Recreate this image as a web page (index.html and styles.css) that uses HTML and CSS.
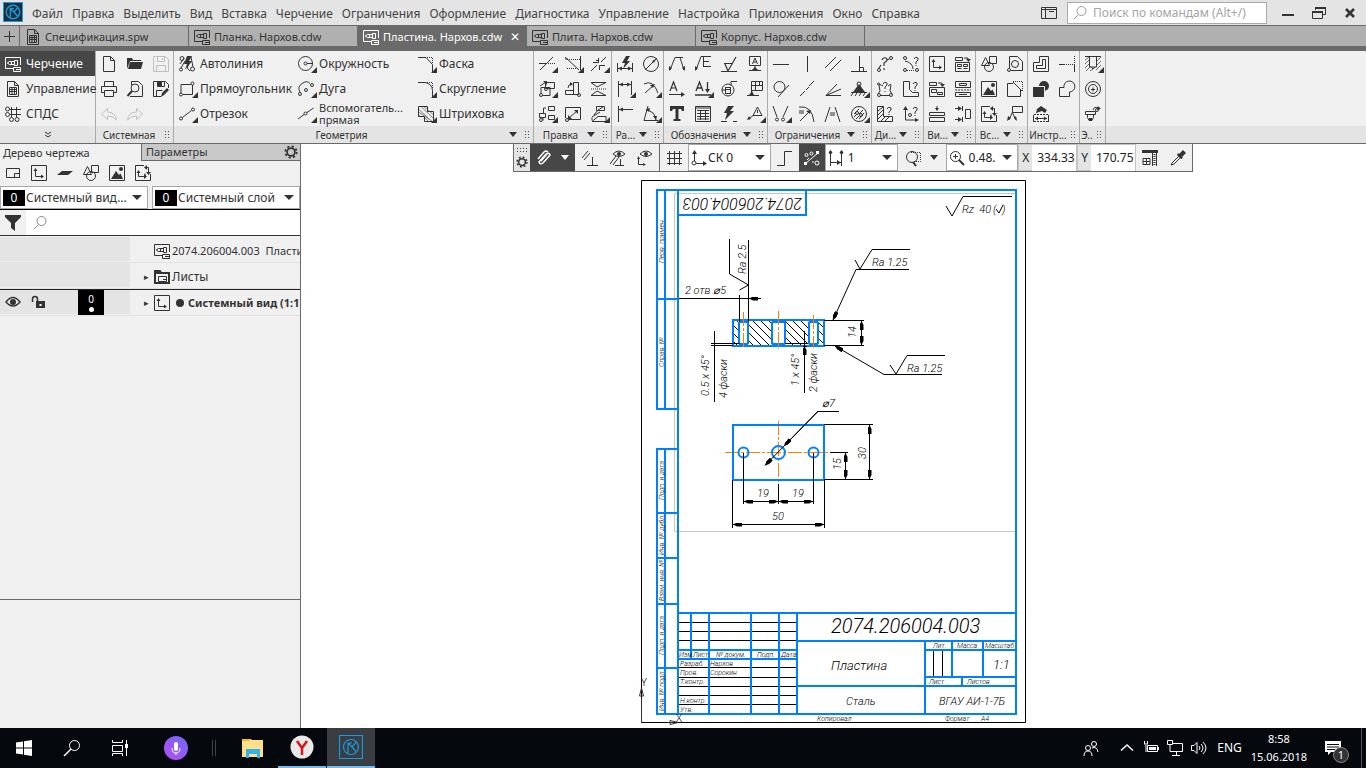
FILE: index.html
```html
<!DOCTYPE html>
<html lang="ru">
<head>
  <meta charset="utf-8">
  <title>Пластина. Нархов.cdw</title>
  <link rel="stylesheet" href="styles.css">
</head>
<body>

<svg class="defs">
  <symbol id="cdw" viewBox="0 0 16 16"><path d="M15.500 9V1.500H.5v11h8M9.500 4.500h3v5h-3zM9.500 5.500h-5l-1.500 1v1l1.500 1h5M2 7h1M6.500 5.500v3M8.500 11.500h7v4h-7zM11 13.500h4"/></symbol>
  <symbol id="spw" viewBox="0 0 16 16"><path d="M2.500.5h7l4 4v11h-11zM9.500.5v4h4M4.500 6.500h7v7h-7zM4.500 8.500h7M4.500 10.500h7M7 6v7.500M9.500 6v7.500"/></symbol>
  <symbol id="view" viewBox="0 0 16 16"><path d="M.5.5h15v15h-15zM4.500 5v6.500H11"/><path class="f" d="M2.500 6l2-3 2 3zM10 9.500l3 2-3 2z"/></symbol>
  <symbol id="frag" viewBox="0 0 16 16"><path d="M8.500.5h7v7h-7zM.5 9.500l4-8 4 8z"/><circle cx="8" cy="11" r="4.500"/></symbol>
  <symbol id="pic" viewBox="0 0 16 16"><path d="M.5.5h15v15h-15z"/><path class="f" d="M2 14l5-8 3 4 1.500-1.500L14 14z"/><circle class="f" cx="12" cy="4" r="2"/></symbol>
  <symbol id="viewlink" viewBox="0 0 16 16"><path d="M9 .5H.5v15h15V9"/><path d="M10 2.500h3.500v5M3.500 7v4.500H10v-3"/><path class="f" d="M12 0v5l-3-2.500zM11 7h5l-2.500 3zM1.500 8l2-3 2 3zM9 9l3 2.500L9 14z"/></symbol>
  <symbol id="glass" viewBox="0 0 16 16"><circle cx="9.500" cy="6" r="4.500"/><path d="M6.500 9.500L2 14"/></symbol>
  <symbol id="gear" viewBox="0 0 16 16"><circle cx="8" cy="8" r="4.500" stroke-width="2"/><circle cx="8" cy="8" r="6.500" stroke-width="2" stroke-dasharray="2.500 2.600"/></symbol>
  <symbol id="logo" viewBox="0 0 20 20"><circle cx="10" cy="10" r="7.500"/><path d="M7 16V6h4M7 6l4 4 4.500-5M11 10l4.500 5"/></symbol>
</svg>

<header class="menubar">
  <svg class="app-logo"><use href="#logo"/></svg>
  <nav class="menu">
    <button>Файл</button>
    <button>Правка</button>
    <button>Выделить</button>
    <button>Вид</button>
    <button>Вставка</button>
    <button>Черчение</button>
    <button>Ограничения</button>
    <button>Оформление</button>
    <button>Диагностика</button>
    <button>Управление</button>
    <button>Настройка</button>
    <button>Приложения</button>
    <button>Окно</button>
    <button>Справка</button>
  </nav>
  <button class="layout-btn" aria-label="Экран"><svg class="i"><path d="M.5 2.500h15v11h-15zM.5 4.500h15M4.500 3v10M8 6.500h5"/></svg></button>
  <label class="search"><svg class="i"><use href="#glass"/></svg><input type="text" placeholder="Поиск по командам (Alt+/)" aria-label="Поиск"></label>
  <button class="win" aria-label="Свернуть"><svg class="i"><path class="f" d="M2 9h12v2H2z" stroke="none"/></svg></button>
  <button class="win" aria-label="Развернуть"><svg class="i"><path d="M4.500 5V3.500h10v6H12M1.500 7.500h10v6h-10z"/><path d="M4 3h11M1 7h11" stroke-width="2"/></svg></button>
  <button class="win" aria-label="Закрыть"><svg class="i"><path d="M4 4l8 8M12 4l-8 8" stroke-width="2.500"/></svg></button>
</header>

<div class="tabs">
  <button class="tab-add" aria-label="Создать"><svg class="i"><path d="M8.500 3v11M3 8.500h11"/></svg></button>
  <button class="tab"><svg class="i"><use href="#spw"/></svg>Спецификация.spw</button>
  <button class="tab"><svg class="i"><use href="#cdw"/></svg>Планка. Нархов.cdw</button>
  <button class="tab active"><svg class="i"><use href="#cdw"/></svg>Пластина. Нархов.cdw<span class="close">✕</span></button>
  <button class="tab"><svg class="i"><use href="#cdw"/></svg>Плита. Нархов.cdw</button>
  <button class="tab"><svg class="i"><use href="#cdw"/></svg>Корпус. Нархов.cdw</button>
</div>

<div class="ribbon">
  <div class="group sets">
    <div class="set-list">
      <button class="on"><svg class="i"><use href="#cdw"/></svg>Черчение</button>
      <button><svg class="i"><use href="#spw"/></svg>Управление</button>
      <button><svg class="i"><path d="M5 3.500h11M5 8.500h11M6.500 1v10M11.500 1v10"/><circle cx="2.500" cy="3" r="2"/><circle cx="2.500" cy="8.500" r="2"/><circle cx="6.500" cy="13.500" r="2"/><circle cx="12" cy="13.500" r="2"/></svg>СПДС</button>
    </div>
    <footer><svg class="i"><path d="M5 5l3 2 3-2M5 8l3 2 3-2"/></svg></footer>
  </div>

  <div class="group">
    <div class="tools w3">
      <button><svg class="i"><path d="M2.500.5h7l4 4v11h-11zM9.500.5v4h4"/></svg></button>
      <button><svg class="i"><path class="f" d="M0 13V2h5l1 2h8v1H3z"/><path class="f" d="M3 6h13l-2 7H1z"/></svg></button>
      <button class="off"><svg class="i"><path d="M.5.5h12l3 3v12H.5zM4.500.5v5h7v-5M3.500 15V9.500h9V15M9.500 2v2"/></svg></button>
      <button><svg class="i"><path d="M3.500 5V.5h9V5M3.500 11.500h-3v-6h15v6h-3M3.500 9.500h9v6h-9z"/></svg></button>
      <button><svg class="i"><path d="M4.500 4V.5h7l4 4v11h-8M3 15.500h5"/><circle cx="8" cy="7" r="4"/><path d="M5 10l-4.500 5" stroke-width="2"/></svg></button>
      <button><svg class="i"><path d="M8 15.500H.5V.5h12l3 3V7M4.500.5v5h7v-5M3.500 15V9.500h6" /><path class="f" d="M8 16l1-4 5-5 2 2-5 5z"/><path class="f" d="M4 1h5v4H4z"/></svg></button>
      <button class="off"><svg class="i"><path d="M.5 8l6-5.500v3.500q8 0 9 8-3-4-9-4v3.500z"/></svg></button>
      <button class="off"><svg class="i"><path d="M15.500 8l-6-5.500v3.500q-8 0-9 8 3-4 9-4v3.500z"/></svg></button>
    </div>
    <footer><span>Системная</span><i class="grip"></i></footer>
  </div>

  <div class="group geometry">
    <div class="commands">
      <button><svg class="i"><circle cx="3" cy="2.500" r="2"/><circle cx="2" cy="13.500" r="1.500"/><circle cx="13.500" cy="13" r="2"/><path d="M5 2l-4 6M2 12l4-7M11 15q-4-2-2-6M12 1l2 10"/><path class="f" d="M8 0h5l-3 5h3l-7 9 2-6H5z"/></svg>Автолиния</button>
      <button class="more"><svg class="i"><path d="M2 12V3.500h10M4 13.500h9.500V4"/><circle cx="2" cy="13.500" r="1.500"/><circle cx="13.500" cy="2.500" r="1.500"/></svg>Прямоугольник</button>
      <button class="more"><svg class="i"><circle cx="2" cy="12.500" r="1.500"/><circle cx="14" cy="3.500" r="1.500"/><path d="M3.500 11.500l9-7"/></svg>Отрезок</button>
      <button class="more"><svg class="i"><circle cx="7.500" cy="7.500" r="7"/><circle cx="7.500" cy="7.500" r="1.500"/><path d="M9 7.500h6"/></svg>Окружность</button>
      <button class="more"><svg class="i"><path d="M2 11q-3-5 2-8.500t8 0"/><circle cx="2" cy="13" r="1.500"/><circle cx="8" cy="9" r="1.500"/><circle cx="14" cy="4" r="1.500"/></svg>Дуга</button>
      <button class="more two"><svg class="i"><path d="M0 13l6-4.500M9 6.500L15.500 2"/><circle cx="7.500" cy="7.500" r="1.500"/></svg><span>Вспомогатель...<br>прямая</span></button>
      <button class="more"><svg class="i"><path d="M0 1.500h8l6.500 7V16"/><path d="M9 1.500h5.500V8" stroke-dasharray="1 1"/></svg>Фаска</button>
      <button class="more"><svg class="i"><path d="M0 1.500h7q7 1 7.500 8V16"/><path d="M9 1.500h5.500V8" stroke-dasharray="1 1"/></svg>Скругление</button>
      <button class="more"><svg class="i"><path d="M.5.5h9v5h6v10h-9v-5h-6z"/><path d="M.5 3l10 9.500M.5 6l14 9.500M3 .5l12 11.500M6 .5l9 8M.5 9l2 1.500M7 12l3 3" stroke-width=".6"/></svg>Штриховка</button>
    </div>
    <footer><span>Геометрия</span><i class="arrow"></i><i class="grip"></i></footer>
  </div>

  <div class="group">
    <div class="tools w3">
      <button class="more"><svg class="i"><path d="M0 7.500h8M1 14L14 1"/><path d="M9 7.500h7" stroke-dasharray="1 1"/></svg></button>
      <button class="more"><svg class="i"><path d="M0 1l14 13M15.500 0v14M0 3h3"/><path d="M4 3.500h11M2 12.500h11" stroke-dasharray="1 1"/></svg></button>
      <button class="more"><svg class="i"><path d="M0 15l6-6M10 6l5-5M2 6.500h5.500V2M14 9.500H8.500V14M5 4.500h3"/></svg></button>
      <button class="more"><svg class="i"><path d="M6.500 1.500h9v6h-9zM4 14.500h7v-8h-9v6M1 5l6-4"/><circle cx="2" cy="14" r="1.500"/><circle cx="7" cy="8" r="1.500"/><path class="f" d="M4 0h4v4z"/></svg></button>
      <button><svg class="i"><path d="M8.500 1.500h5v12h-5zM.5 9.500h8v4h-8zM3 7q0-4 4-4"/><circle cx="14" cy="14" r="1.500"/><path class="f" d="M5 1l3 2-3 2z"/></svg></button>
      <button><svg class="i"><path d="M0 1.500h15L6 6 0 1.500M0 14.500h15L6 10z"/><path d="M0 8h16" stroke-dasharray="1 1"/></svg></button>
      <button class="more"><svg class="i"><path d="M9.500.5h6v4h-6zM.5 7.500h6v4h-6zM9.500 9.500h6v4h-6zM7 2H4.500v5M4 12v2.500"/><circle cx="2" cy="14" r="1.500"/></svg></button>
      <button><svg class="i"><path d="M.5 12V1.500h15v12H4M4 12l8-7"/><path class="f" d="M9 4h4v4zM3 9v4h4z"/><circle cx="2" cy="14" r="1.500"/></svg></button>
      <button class="more"><svg class="i"><path d="M5.500.5h8v4h-8zM1 15.500h14v-5H7zM1 11l8-5M1 11.500v3M7 4l-4 5M7 4l5-3"/></svg></button>
    </div>
    <footer><span>Правка</span><i class="arrow"></i><i class="grip"></i></footer>
  </div>

  <div class="group">
    <div class="tools w2">
      <button><svg class="i"><path d="M.5 7v9M15.500 7v9M1 12.500h14"/><path class="f" d="M9 0h4l-3 5h3l-7 8 2-6H5zM1 12.500l4-2v4zM15 12.500l-4-2v4z"/></svg></button>
      <button><svg class="i"><circle cx="8" cy="8" r="7.500"/><path d="M2 14L14 2"/><path class="f" d="M13 3l-4 2 2 2z"/></svg></button>
      <button class="more"><svg class="i"><path d="M1.500 0v16M14.500 0v14M2 3.500h12"/><path class="f" d="M2 3.500l4-2v4zM14 3.500l-4-2v4z"/></svg></button>
      <button class="more"><svg class="i"><path d="M1 3q9-5 14 9M2 12l9-8"/><path class="f" d="M12 3L7 4l3 3z"/></svg></button>
      <button><svg class="i"><path d="M1.500 0v16M2 3.500h14"/><path class="f" d="M2 3.500l4-2v4z"/></svg></button>
      <button class="more"><svg class="i"><path d="M5 0L1 14.500h14M3 4q9 1 10 10"/><path class="f" d="M3 3l4-1-1 4zM13 14l-3-4h4z"/></svg></button>
    </div>
    <footer><span>Ра...</span><i class="arrow"></i><i class="grip"></i></footer>
  </div>

  <div class="group">
    <div class="tools w4">
      <button><svg class="i"><path d="M1 14L6 1.500h5L15 14M11 1.500h3"/><path class="f" d="M0 15v-5l3 2zM16 15v-5l-3 2z"/></svg></button>
      <button><svg class="i"><path d="M1 14L6 .5h2M8.500.5v10M8 .5h8M8 5.500h6M8 10.500h8"/><path class="f" d="M0 15v-5l3 2z"/></svg></button>
      <button><svg class="i"><path d="M0 15.500h16M3 7.500h9M4 8l3 7 8-14" stroke-width="1.200"/></svg></button>
      <button><svg class="i"><path d="M2.500.5h11v9h-11zM8 10v4M2 14.500h12M5.500 8L8 2l2.500 6M6 6h4"/><path class="f" d="M5 14l3-3 3 3z"/></svg></button>
      <button><svg class="i"><path d="M1 10L4.500 1 8 10M2 7h5M0 13.500h13" stroke-width="1.200"/><path class="f" d="M12 11l4 2.500-4 2.500z"/></svg></button>
      <button class="more"><svg class="i"><path d="M1 10L4.500 1 8 10M2 7h5M12.500 1v8M0 14h16" stroke-width="1.300"/><path class="f" d="M10 8h5l-2.500 4z"/></svg></button>
      <button><svg class="i"><circle cx="7" cy="9" r="6"/><path d="M4.500 6v7M9.500 6v7M5 6.500h4M5 12.500h4M5 8.500h4M10 5V.5h6M1 9h4"/></svg></button>
      <button><svg class="i"><path d="M4.500 14V.5h11v9h-11M4.500 4.500h11M8.500 1v8M12.500 1v4M0 14.500h12"/><path class="f" d="M2 14l3-4 2 4z"/></svg></button>
      <button><svg class="i"><path class="f" d="M1 0h14v5h-2l-1-2H9.500v10h2V15h-7v-2h2V3H4L3 5H1z"/></svg></button>
      <button><svg class="i"><path d="M.5.5h15v15H.5zM2 4.500h12M2 7.500h12M2 10.500h12M2 13h12M5.500 4v10M10.500 4v10M1 2h14"/></svg></button>
      <button><svg class="i"><path class="f" d="M7 0h6l-4 5h4l-9 9 2-7H3z"/><path d="M0 15.500h6M12 15.500h4"/></svg></button>
      <button class="more"><svg class="i"><path d="M6 9.500L10.500 1 15 9.500zM10.500 4v3M6 9.500L2 13"/><path class="f" d="M0 14l2-4 2 3z"/></svg></button>
    </div>
    <footer><span>Обозначения</span><i class="arrow"></i><i class="grip"></i></footer>
  </div>

  <div class="group">
    <div class="tools w4">
      <button><svg class="i"><path d="M0 8.500h16"/></svg></button>
      <button><svg class="i"><path d="M8.500 0v16"/></svg></button>
      <button><svg class="i"><path d="M0 12L11 1M5 15L16 4"/></svg></button>
      <button><svg class="i"><path d="M0 15.500h16M8.500 0v15M8 11.500h4.500v4"/></svg></button>
      <button><svg class="i"><circle cx="6.500" cy="6" r="5.500"/><path d="M5 16L16 4"/></svg></button>
      <button><svg class="i"><path d="M1 15l5-5M7 9l3-3M10 5l5-5"/></svg></button>
      <button><svg class="i"><path d="M1 14.500L12 3M1 14.500L16 8M1 14.500h15"/></svg></button>
      <button class="more"><svg class="i"><circle cx="8" cy="3" r="2"/><path class="f" d="M8 3l6 8H2z"/><path d="M0 11.500h16M2 12l-2 3M6 12l-2 3M10 12l-2 3M14 12l-2 3"/></svg></button>
      <button class="more"><svg class="i"><path d="M0 0l4 11M15 0l-5 11"/><circle cx="4" cy="13.500" r="1.500"/><circle cx="10" cy="13.500" r="1.500"/></svg></button>
      <button><svg class="i"><path d="M0 1q13-2 15 15M0 5h5M0 7h5M1 15L11 5"/><path class="f" d="M12 4L7 5l4 3z"/></svg></button>
      <button><svg class="i"><path d="M0 16L5 1M10 1l5 15M5 7h5M5 9h5"/></svg></button>
      <button class="more"><svg class="i"><circle cx="8" cy="8" r="7.500"/><path d="M3 8l5-5M3 11l3-3M8 8l4-4M5 13l3-3M8 13l5-6"/><circle cx="6" cy="7" r="1.500"/><circle cx="10" cy="9" r="1.500"/></svg></button>
    </div>
    <footer><span>Ограничения</span><i class="arrow"></i><i class="grip"></i></footer>
  </div>

  <div class="group">
    <div class="tools w2">
      <button><svg class="i"><circle cx="2" cy="14" r="1.500"/><circle cx="14" cy="2" r="1.500"/><path d="M2 12l2-3M10 4l2-1M5 4q1-3 4-2 3 2-2 5v3M7 12v2" stroke-width="1.200"/></svg></button>
      <button><svg class="i"><circle cx="2" cy="2" r="1.500"/><circle cx="2" cy="14" r="1.500"/><circle cx="14" cy="14" r="1.500"/><path d="M2 5q8 2 8 8M11 3q1-3 4-1 1 2-2 4v2M13 9v1"/><path d="M4 14.500h8" stroke-dasharray="1 1"/></svg></button>
      <button><svg class="i"><path d="M2 3l4 2M14 3l-3 2M2 4l1 6-2 3M14 4l-1 6 2 3M3 14.500h10M6 3q1-3 4-1 1 2-2 4v2M8 10v1"/><circle cx="2" cy="14" r="1.500"/><circle cx="14" cy="14" r="1.500"/><circle cx="1.500" cy="3" r="1"/></svg></button>
      <button><svg class="i"><path d="M.5.5h6v8l3 3h6v4H.5zM10 3q1-3 4-1 1 2-2 4v2M12 9v1"/></svg></button>
      <button><svg class="i"><path d="M.5.5h6v10h9v5H.5zM1 5l5-4M1 9l5-5M1 13l6-6M4 15l4-4M8 15l4-4M10 3q1-3 4-1 1 2-2 4v1M12 8v1"/></svg></button>
      <button><svg class="i"><path d="M2.500 2v12H14M10 3q1-3 4-1 1 2-2 4v2M12 9v1"/><circle cx="7" cy="9" r="1.500"/><path class="f" d="M0 4l2.500-4L5 4zM12 12l4 2-4 2z"/></svg></button>
    </div>
    <footer><span>Ди...</span><i class="arrow"></i><i class="grip"></i></footer>
  </div>

  <div class="group">
    <div class="tools w2">
      <button><svg class="i"><use href="#view"/></svg></button>
      <button><svg class="i"><path d="M.5 1.500h7v3h-7zM.5 6.500h14v9H.5zM2.500 8.500h4v2h-4zM8.500 8.500h4v2h-4zM2.500 12.500h4M8.500 12.500h4M9 2h4v2"/><path class="f" d="M11 3h5l-2.500 3z"/></svg></button>
      <button><svg class="i"><path d="M.5 1.500h7v3h-7zM.5 6.500h15v9H.5zM2.500 8.500h5v3h-5zM8.500 11.500h5v2h-5zM9 2h4v2"/><path class="f" d="M11 3h5l-2.500 3z"/></svg></button>
      <button><svg class="i"><path d="M.5.5h15v6H.5zM4.500 2.500h7v2h-7zM.5 11.500h15v4H.5zM4 13.500h8"/><path d="M0 9h16" stroke-dasharray="2 1"/></svg></button>
      <button><svg class="i"><path d="M.5 6.500h15v3H.5zM.5 11.500h15v4H.5zM8 0v4"/><path class="f" d="M6 2h4L8 5z"/></svg></button>
      <button><svg class="i"><path d="M10.500 3.500h5v9h-5zM7.500 0v5M7.500 11v5M0 2.500h5M0 13.500h5"/><path class="f" d="M3 0l4 2.500L3 5zM3 11l4 2.500L3 16z"/></svg></button>
    </div>
    <footer><span>Ви...</span><i class="arrow"></i><i class="grip"></i></footer>
  </div>

  <div class="group">
    <div class="tools w2">
      <button><svg class="i"><use href="#frag"/></svg></button>
      <button><svg class="i"><path d="M2.500 12V.5h8l5 5v9H4"/><circle cx="8" cy="8" r="3.500"/><circle cx="2" cy="14" r="1.500"/></svg></button>
      <button><svg class="i"><use href="#pic"/></svg></button>
      <button><svg class="i"><path d="M6 2.500H.5v13h13V9M6 1l9 9"/><path d="M6 .5h9.500V10" stroke-dasharray="1 1"/></svg></button>
      <button><svg class="i"><use href="#viewlink"/></svg></button>
      <button><svg class="i"><path d="M5.500.5h10v6h-10zM5.500 6L2 14M5.500 7L9 14"/><path class="f" d="M0 15l1-5 3 2zM10 15l-1-5-2 2z"/></svg></button>
    </div>
    <footer><span>Вс...</span><i class="arrow"></i><i class="grip"></i></footer>
  </div>

  <div class="group">
    <div class="tools w2">
      <button><svg class="i"><path d="M6.500.5h9v15H.5V6.500h6zM9.500 3.500h3v9h-9v-3h6z"/></svg></button>
      <button><svg class="i"><path d="M0 8.500h6M15.500 8v8"/><path d="M7 8.500h8M15.500 0v8" stroke-dasharray="1 1"/></svg></button>
      <button><svg class="i"><circle class="f" cx="11" cy="5" r="5"/><path class="f" d="M0 6h11v10H0z"/><path d="M0 5.500h11.500v6" stroke="#f0f0f0"/></svg></button>
      <button><svg class="i"><path d="M.5 6.500h4.500a5.500 5.500 0 1 1 5.500 4.500v4.500H.5z"/></svg></button>
      <button><svg class="i"><path class="f" d="M4 3l4-3 6 4-2 3-3-2-6 2z"/><path d="M.5 9v7M15.500 9v7M2 12.500h12"/><path d="M1 8.500h14M1 15.500h14" stroke-dasharray="2 1"/><path class="f" d="M2 12.500l3-2v4zM14 12.500l-3-2v4z"/></svg></button>
    </div>
    <footer><span>Инстр...</span><i class="grip"></i></footer>
  </div>

  <div class="group">
    <div class="tools w1">
      <button class="more"><svg class="i"><path d="M0 .5h16M4.500 1v10h7V1M6 11l2 2 2-2"/><path d="M0 4l4-3M0 8l4-4M0 12l4-4M1 15l4-4M5 15l3-2M12 5l4-4M12 9l4-4M11 14l5-5" stroke-width=".7"/></svg></button>
      <button><svg class="i"><circle cx="8" cy="8" r="7.500"/><circle cx="8" cy="8" r="4.500"/><path d="M6 8.500h4M8 6.500v4"/></svg></button>
      <button><svg class="i"><path d="M.5 5.500h10v3h-10zM2.500 8.500v3l1.500 3h3l1.500-3v-3M8 4q1-4 6-2"/><circle cx="12" cy="4" r="1.500"/><path class="f" d="M13 0l3 3-4 1zM4 12h3v3H4z"/></svg></button>
    </div>
    <footer><span>Э..</span><i class="grip"></i></footer>
  </div>
</div>

<main class="work">
  <aside class="panel">
    <div class="panel-tabs">
      <button class="on">Дерево чертежа</button>
      <button>Параметры<svg class="i"><use href="#gear"/></svg></button>
    </div>
    <div class="panel-tools">
      <button><svg class="i"><path d="M1.500 3.500h13v9h-13zM9.500 8.500h5v4h-5z"/></svg></button>
      <button><svg class="i"><use href="#view"/></svg></button>
      <button><svg class="i"><path class="f" d="M5 6h11l-5 4H0z"/></svg></button>
      <button><svg class="i"><use href="#frag"/></svg></button>
      <button><svg class="i"><use href="#pic"/></svg></button>
      <button><svg class="i"><use href="#viewlink"/></svg></button>
    </div>
    <div class="layers">
      <label class="pick"><b>0</b><select aria-label="Вид"><option>Системный вид...</option></select></label>
      <label class="pick"><b>0</b><select aria-label="Слой"><option>Системный слой</option></select></label>
    </div>
    <label class="filter">
      <svg class="i"><path class="f" d="M0 0h16v2l-6 6v8l-4-3V8L0 2z"/></svg>
      <span><svg class="i"><use href="#glass"/></svg><input type="text" aria-label="Фильтр"></span>
    </label>
    <ul class="tree">
      <li class="doc"><div class="state"></div><div class="node"><i></i><svg class="i"><use href="#cdw"/></svg>2074.206004.003&nbsp; Пластина</div></li>
      <li><div class="state"></div><div class="node"><i>▸</i><svg class="i"><path d="M1 14V2h5l1 2h8v10z" stroke-width="2"/><path class="f" d="M1 2h5l1 3H1z"/><path d="M4.500 7.500h8v5h-8zM9 10.500h3"/></svg>Листы</div></li>
      <li class="current">
        <div class="state">
          <svg class="i"><path d="M1 8q7-9 14 0-7 8-14 0z" stroke-width="1.500"/><circle class="f" cx="8" cy="8" r="3"/></svg>
          <svg class="i"><path class="f" d="M5 7h9v7H5z"/><path d="M1.500 8V5q0-2.500 2.500-2.500T6.500 5v3" stroke-width="1.500"/><path d="M9.500 10v2" stroke="#fff" stroke-width="2"/></svg>
          <b>0<i></i></b>
        </div>
        <div class="node"><i>▸</i><svg class="i"><use href="#view"/></svg><em></em>Системный вид (1:1)</div>
      </li>
    </ul>
  </aside>

  <section class="canvas">
    <div class="quickbar">
      <div class="handle"><i></i><svg class="i"><use href="#gear"/></svg></div>
      <button class="dark snap"><svg class="i"><path d="M3 12l7-8q3-2 4 1l-7 8q-3 2-4-1zM5 11l6-7M2 9l6-7q2-2 4 0" stroke-width="1.500"/></svg><i class="arrow"></i></button>
      <button><svg class="i"><path d="M0 8l6-7M2 10l6-7M5 15.500h11M10.500 7v8"/></svg></button>
      <button><svg class="i"><path d="M0 14l6-8M3 15l6-8M5 15.500h9M10.500 9v6M3 4q6-6 12 0-6 5-12 0z"/><circle class="f" cx="9" cy="4" r="2"/></svg></button>
      <button class="sep"><svg class="i"><path d="M1.500 9v5.500H7M3 4q6-6 12 0-6 5-12 0z"/><circle class="f" cx="9" cy="4" r="2"/><path class="f" d="M0 9l1.500-3L3 9zM6 13l3 1.500L6 16z"/></svg></button>
      <button><svg class="i"><path d="M3.500 1v14M8.500 1v14M13.500 1v14M1 3.500h15M1 8.500h15M1 13.500h15"/></svg></button>
      <label class="box cs"><svg class="i"><path d="M3.500 3v8M5 13.500h8"/><circle cx="3" cy="13" r="2"/><path class="f" d="M1 4l2.500-4L6 4zM12 11l4 2.500-4 2.500z"/></svg><select aria-label="Система координат"><option>СК 0</option></select></label>
      <button><svg class="i"><path d="M0 15.500h7.500v-14H15"/></svg></button>
      <button class="dark"><svg class="i"><circle cx="2.500" cy="5" r="1.500"/><circle cx="7.500" cy="3.500" r="1.500"/><circle cx="13" cy="13" r="2"/><path d="M1 14L14 3M8 12h2M3 10l2-2"/><path class="f" d="M12 1h3v3h-3zM0 12h3v3H0z"/></svg></button>
      <label class="box step"><svg class="i"><path d="M2.500 3v13M13.500 3v13M3 12.500h10"/><path class="f" d="M2.500 0l2 2.500-2 2.500-2-2.500zM13.500 0l2 2.500-2 2.500-2-2.500zM9 10l4 2.500L9 15z"/></svg><select aria-label="Шаг"><option>1</option></select></label>
      <button class="fit"><svg class="i"><circle cx="7" cy="7" r="5.500"/><path d="M8 12l3 4" stroke-width="2"/><path d="M6 2.500h9.500v9H8" stroke-dasharray="1 1"/></svg><i class="arrow"></i></button>
      <label class="box scale"><svg class="i"><circle cx="6.500" cy="6.500" r="5"/><path d="M4 6.500h5M6.500 4v5"/><path d="M10 10l5 5" stroke-width="2"/></svg><select aria-label="Масштаб"><option>0.48.</option></select></label>
      <label class="coord">X<input type="text" value="334.337"></label>
      <label class="coord">Y<input type="text" value="170.757"></label>
      <button><svg class="i"><path d="M1 1.500h14M10.500 2v14M14.500 2v14M1 8.500h7v6H1zM1 11.500h7M4.500 8.500v6"/><path class="f" d="M0 0h16v3H0z"/><path d="M12.500 4v12" stroke-dasharray="1 1" stroke-width="2"/></svg></button>
      <button><svg class="i"><path class="f" d="M9 4l4-4 3 3-4 4 1 1-2 1-4-4 1-2z"/><path d="M9 6l-7 7-1 2 3-1 7-7"/></svg></button>
    </div>

    <svg class="sheet" viewBox="641 180 386 544">
      <defs>
        <marker id="arr" markerWidth="9" markerHeight="4" refX="9" refY="2" orient="auto-start-reverse" markerUnits="userSpaceOnUse"><path d="M0 0h5l4 2-4 2H0z" fill="#000"/></marker>
        <pattern id="hatch" width="8" height="8" patternUnits="userSpaceOnUse"><path d="M-1-1l10 10M-1 7l2 2M7-1l2 2" stroke="#000"/></pattern>
      </defs>
      <path class="grey" d="M674.500 531.500v-338H1015M674.500 531.500H1015"/>
      <path class="thin" d="M641.500 180.500h384v542h-384z"/>

      <!-- section view -->
      <path d="M734 321h5v24h-5zM748 321h24v24h-24zM785 321h23v24h-23zM818 321h6v24h-6z" fill="url(#hatch)"/>
      <path class="bold" d="M733 320h91v26h-91zM739 322v22M748 322v22M772 322v22M785 322v22M809 322v22M818 322v22M739 322h9M739 344h9M772 322h13M772 344h13M809 322h9M809 344h9"/>
      <path class="axis" d="M743.500 312v37M778.500 311v38M813.500 315v33M778.500 421v63"/>
      <path class="axis" d="M725 452.500h105"/>

      <!-- top view -->
      <path class="bold" d="M733 425h91v55h-91z"/>
      <g class="bold"><circle cx="743.500" cy="452.500" r="5"/><circle cx="778.500" cy="452.500" r="6.500"/><circle cx="813.500" cy="452.500" r="5"/></g>

      <!-- dimensions -->
      <g class="thin">
        <path d="M729.500 239v35l19 11-9 5M748.500 240v82M739.500 295v27M678 298.500h83"/>
        <path d="M730 298.500h9M758 298.500h-9" marker-end="url(#arr)"/>
        <path d="M714.500 331v71M711 343.500h29M711 345.500h22M804.500 331v62M785 343.500h22M803 346.500h4"/>
        <path d="M714.500 333v10M714.500 356v-10M804.500 333v10M804.500 356v-10" marker-end="url(#arr)"/>
        <path d="M824 320.500h40M824 345.500h40"/>
        <path d="M861.500 321v24" marker-start="url(#arr)" marker-end="url(#arr)"/>
        <path d="M909 269.500h-53L833 320" marker-end="url(#arr)"/>
        <path d="M855 260l5 9 12-19.500h38"/>
        <path d="M942 374.500h-58L835 346" marker-end="url(#arr)"/>
        <path d="M890 365l6 9 11-18.500h38"/>
        <path d="M946 206l6 10 11-19.500h49M996 209l3 4 4-8"/>
        <path d="M839 411.500h-21l-53 54" marker-end="url(#arr)"/>
        <path d="M818 411l-34 35" marker-end="url(#arr)"/>
        <path d="M743.500 453v51M778.500 484v20M813.500 453v51M732.500 480v48M824.500 480v48M824 424.500h49M824 479.500h49M830 452.500h18"/>
        <path d="M744 501.500h34" marker-start="url(#arr)" marker-end="url(#arr)"/>
        <path d="M779 501.500h34" marker-start="url(#arr)" marker-end="url(#arr)"/>
        <path d="M733 524.500h91" marker-start="url(#arr)" marker-end="url(#arr)"/>
        <path d="M845.500 453v26" marker-start="url(#arr)" marker-end="url(#arr)"/>
        <path d="M869.500 425v54" marker-start="url(#arr)" marker-end="url(#arr)"/>
      </g>

      <!-- title block -->
      <path class="thin" d="M678 622.500h119M678 631.500h119M678 640.500h119M678 667.500h119M678 677.500h119M678 686.500h119M678 695.500h119M678 704.500h119M933.500 650v27M942.500 650v27"/>
      <path class="bold" d="M678 190h338v524H678zM678 215h128v-25M678 190h-21v219h21M665 190v219M657 299h21M678 449h-21v265h21M665 449v265M657 513h21M657 558h21M657 604h21M657 668h21"/>
      <path class="bold" d="M678 613h338M678 650h119M678 659h119M691 613v46M709 613v101M751 613v101M779 613v101M797 613v101M797 641h219M797 686h219M925 641v73M925 650h91M925 677h91M952 641v36M983 641v36M962 677v9"/>

      <text class="code" x="831" y="633">2074.206004.003</text>
      <text class="stamp" transform="translate(802 198) rotate(180)">2074.206004.003</text>
      <g class="name">
        <text x="831" y="670">Пластина</text>
        <text x="993" y="669">1:1</text>
      </g>
      <g class="note">
        <text x="846" y="705">Сталь</text>
        <text x="939" y="705">ВГАУ АИ-1-7Б</text>
        <text x="962" y="213">Rz&nbsp; 40</text>
        <text x="993" y="213">(</text>
        <text x="1002" y="213">)</text>
        <text x="872" y="266">Ra&nbsp;1.25</text>
        <text x="907" y="372">Ra&nbsp;1.25</text>
        <text x="685" y="294">2 отв ⌀5</text>
        <text x="822" y="407">⌀7</text>
        <text x="757" y="497">19</text>
        <text x="792" y="497">19</text>
        <text x="772" y="520">50</text>
        <text transform="translate(746 274) rotate(-90)">Ra&nbsp;2.5</text>
        <text transform="translate(856 338) rotate(-90)">14</text>
        <text transform="translate(866 459) rotate(-90)">30</text>
        <text transform="translate(841 470) rotate(-90)">15</text>
        <text transform="translate(709 396) rotate(-90)">0.5 x 45°</text>
        <text transform="translate(727 398) rotate(-90)">4 фаски</text>
        <text transform="translate(799 386) rotate(-90)">1 x 45°</text>
        <text transform="translate(817 392) rotate(-90)">2 фаски</text>
      </g>
      <g class="cell">
        <text x="679" y="657">Изм.</text><text x="693" y="657">Лист</text><text x="716" y="657">№ докум.</text><text x="757" y="657">Подп.</text><text x="781" y="657">Дата</text>
        <text x="680" y="666">Разраб.</text><text x="710" y="666">Нархов</text>
        <text x="680" y="675">Пров.</text><text x="710" y="675">Сорокин</text>
        <text x="680" y="684">Т.контр.</text>
        <text x="680" y="703">Н.контр.</text>
        <text x="680" y="712">Утв.</text>
        <text x="933" y="648">Лит.</text><text x="957" y="648">Масса</text><text x="985" y="648">Масштаб</text>
        <text x="929" y="684">Лист</text><text x="967" y="684">Листов</text>
        <text x="817" y="721">Копировал</text><text x="945" y="721">Формат</text><text x="981" y="721">А4</text>
        <text transform="translate(664 263) rotate(-90)">Перв. примен.</text>
        <text transform="translate(664 367) rotate(-90)">Справ. №</text>
        <text transform="translate(664 500) rotate(-90)">Подп. и дата</text>
        <text transform="translate(664 555) rotate(-90)">Инв. № дубл.</text>
        <text transform="translate(664 601) rotate(-90)">Взам. инв. №</text>
        <text transform="translate(664 655) rotate(-90)">Подп. и дата</text>
        <text transform="translate(664 711) rotate(-90)">Инв. № подл.</text>
      </g>
      <g class="origin"><path d="M641.500 722.500V698M641.500 688l2 8h-4zM668 722.500h6M678 722.500l-8-2v4z"/><text x="641" y="686">Y</text><text x="676" y="722">X</text></g>
    </svg>
  </section>
</main>

<footer class="taskbar">
  <button aria-label="Пуск"><svg class="i"><path class="f" d="M0 2.500l7-1v6H0zM8 1.300L16 0v7.500H8zM0 8.500h7v6l-7-1zM8 8.500h8V16l-8-1.200z"/></svg></button>
  <button aria-label="Поиск"><svg class="i"><circle cx="10.500" cy="5.500" r="5"/><path d="M7 9L0 16" stroke-width="1.500"/></svg></button>
  <button aria-label="Задачи"><svg class="i"><path d="M.5 0v2.500h10V0M.5 5.500h10v6H.5zM.5 16v-2.500h10V16M14.500 0v16"/><path class="f" d="M13 4h3v4h-3z"/></svg></button>
  <button class="alice" aria-label="Алиса"><svg viewBox="0 0 24 24"><defs><linearGradient id="al" x1="0" y1="1" x2="1" y2="0"><stop stop-color="#b54df0"/><stop offset="1" stop-color="#7068f5"/></linearGradient></defs><circle cx="12" cy="12" r="12" fill="url(#al)"/><rect x="10" y="6" width="4" height="9" rx="2" fill="#fff"/><path d="M8 12q0 5 4 5t4-5M12 17v2" fill="none" stroke="#fff"/></svg></button>
  <i class="bars"></i>
  <button aria-label="Проводник"><svg viewBox="0 0 24 24"><path d="M1 3h9l1 1h11v17H1z" fill="#ffe08a"/><path d="M1 3h9l-2 2H1z" fill="#f7b916"/><path d="M5 22v-9h14v9h-3v-4H8v4z" fill="#36b1e8"/></svg></button>
  <button class="run" aria-label="Браузер"><svg viewBox="0 0 24 24"><circle cx="12" cy="12" r="11.500" fill="#e9e9e9"/><path d="M7 6l5 7 5-7M12 12v8" fill="none" stroke="#d8171b" stroke-width="2.500"/></svg></button>
  <button class="run cur" aria-label="Компас"><svg viewBox="-2 -2 24 24" class="k"><path d="M-1.500-1.500h23v23h-23z"/><use href="#logo" width="20" height="20"/></svg></button>
  <div class="tray">
    <svg class="i people"><circle cx="5" cy="8" r="2.500"/><circle cx="11" cy="4" r="2.500"/><path d="M1 16q0-5 4-5t4 5M9 8q5-2 6 4"/></svg>
    <svg class="i"><path d="M2 10.500L8 5l6 5.500" stroke-width="1.500"/></svg>
    <svg class="i"><path d="M4.500 5.500h10v6h-10zM1 4h4M1.500 1v3M4.500 1v3M3 5v7"/><path class="f" d="M6 7h7v3H6zM15 7h1v3h-1z"/></svg>
    <svg class="i"><path d="M5 3.500h10.500v8H3V8M.5.5h5v4h-5zM3 5v3M9.500 12v3M5 15.500h8"/></svg>
    <svg class="i"><path d="M.5 5.500H3l3-3v11l-3-3H.5zM8 6q2 2 0 4M10 4q4 4 0 8M12 2q6 6 0 12"/></svg>
    <span class="lang">ENG</span>
    <time>8:58<br>15.06.2018</time>
    <div class="notes"><svg class="i"><path class="f" d="M0 1h16v11H6l-3 3v-3H0z"/><path d="M2 4.500h12M2 7h12M2 9.500h8" stroke="#05080d"/></svg><b>1</b></div>
  </div>
</footer>
</body>
</html>
```
FILE: styles.css
```css
* { box-sizing:border-box; }
html, body { height:100%; }
body { margin:0; display:flex; flex-direction:column; overflow:hidden;
       font:12px/16px "Noto Sans", "Open Sans", sans-serif; color:#333; background:#fff; }

button, input, select { font:inherit; color:inherit; background:none; border:0; padding:0; margin:0; outline:0; }
select { appearance:none; }
ul { list-style:none; margin:0; padding:0; }

.defs { position:absolute; width:0; height:0; }
.i { width:16px; height:16px; flex:none; display:block; fill:none; stroke:#333; color:#333; overflow:visible; }
.f { fill:currentColor; stroke:none; }
.arrow { width:0; height:0; flex:none; border:4px solid transparent; border-top:5px solid #333; border-bottom:0; }

/* menu */
.menubar { display:flex; align-items:center; height:26px; flex:none; background:#e4e4e4; border-bottom:1px solid #6a6a6a; }
.app-logo { width:20px; height:20px; margin:0 9px 2px 3px; background:#1f2d38; border:1px solid #1a9be0; fill:none; stroke:#1a9be0; stroke-width:1.5; }
.menu { display:flex; gap:9px; flex:1; padding-top:2px; color:#444; }
.layout-btn { margin-right:10px; }
.search { display:flex; align-items:center; gap:5px; width:200px; height:22px; padding:0 4px; background:#fff; border:1px solid #a9a9a9; }
.search .i { stroke:#999; }
.search input { flex:1; min-width:0; }
.search input::placeholder { color:#a4a4a4; }
.win { margin-left:15px; }
.search + .win { margin-left:13px; }
.win:last-child { margin-right:8px; }

/* document tabs */
.tabs { display:flex; height:25px; flex:none; background:#b0b0b0; border-bottom:5px solid #6a6a6a; font-size:11px; }
.tab-add { width:20px; border-right:1px solid #6a6a6a; padding-left:1px; }
.tab { display:flex; align-items:center; gap:4px; width:169px; padding:2px 6px 0 5px; border-right:1px solid #6a6a6a; white-space:nowrap; }
.tab.active { background:#6a6a6a; color:#fff; }
.tab.active .i { stroke:#fff; }
.close { margin-left:auto; font-size:12px; }

/* ribbon */
.ribbon { display:flex; height:93px; flex:none; background:linear-gradient(#f0f0f0 75px, #e4e4e4 75px); border-bottom:1px solid #6a6a6a; }
.group { display:flex; flex-direction:column; border-right:1px solid #a9a9a9; }
.group footer { display:flex; align-items:center; height:17px; width:0; min-width:100%; font-size:10px; padding-right:3px; overflow:hidden; }
.group footer span { flex:1; text-align:center; white-space:nowrap; }
.group footer .grip { width:6px; height:9px; margin-left:7px; flex:none; background:radial-gradient(#555 35%, transparent 40%) 0 0/3px 3px; }
.group footer span + .grip { margin-left:2px; }
.sets { width:96px; }
.group.sets footer { justify-content:center; padding:0; }
.set-list button { display:flex; align-items:center; gap:5px; width:95px; height:25px; padding-left:5px; }
.set-list .on { background:#474747; color:#fff; }
.set-list .on .i { stroke:#fff; }
.tools { display:grid; grid-template-rows:repeat(3, 25px); height:75px; }
.w1 { grid-template-columns:25px; }
.w2 { grid-template-columns:26px 25px; }
.w3 { grid-template-columns:26px 26px 25px; }
.w4 { grid-template-columns:26px 26px 26px 25px; }
.tools button { position:relative; display:flex; align-items:center; padding-left:5px; }
.off { opacity:.25; }
.more { position:relative; }
.more::after { content:""; position:absolute; left:18px; bottom:3px; border-left:6px solid transparent; border-bottom:6px solid #333; }
.commands { display:grid; grid-template:repeat(3, 25px) / 119px 120px 120px; grid-auto-flow:column; height:75px; }
.commands button { display:flex; align-items:center; gap:5px; padding-left:5px; text-align:left; white-space:nowrap; }
.commands .two { font-size:11px; line-height:12px; }
.geometry { width:360px; }

/* side panel */
.work { flex:1; display:flex; min-height:0; }
.panel { width:301px; flex:none; background:#f0f0f0; border-right:1px solid #6a6a6a; overflow:hidden; }
.panel-tabs { display:flex; height:17px; font-size:11px; }
.panel-tabs button { display:flex; align-items:center; justify-content:space-between; flex:1; padding:0 1px 0 4px; background:#c8c8c8; border-left:1px solid #6a6a6a; border-bottom:1px solid #6a6a6a; }
.panel-tabs .on { flex:0 0 141px; background:none; border:0; padding-left:3px; }
.panel-tabs .i { width:16px; height:14px; }
.panel-tools { display:flex; gap:10px; padding:4px 5px 5px; }
.layers { display:flex; gap:4px; }
.pick { display:flex; align-items:center; flex:1; height:23px; padding-left:2px; background:#fff; border:1px solid #a9a9a9; }
.pick b { width:22px; height:16px; margin-right:1px; background:#000; color:#fff; text-align:center; font-weight:normal; }
.pick select { flex:1; min-width:0; }
.pick::after, .box::after { content:""; flex:none; margin-right:5px; border:5px solid transparent; border-top-color:#333; border-bottom:0; }
.filter { display:flex; align-items:center; height:27px; padding-left:5px; background:#f0f0f0; border-top:1px solid #000; border-bottom:1px solid #333; }
.filter span { display:flex; align-items:center; flex:1; height:25px; margin-left:5px; padding-left:6px; background:#fff; }
.filter span .i { stroke:#888; }
.tree { height:364px; padding-top:1px; border-bottom:1px solid #6a6a6a; }
.tree li { display:flex; height:26px; border-bottom:1px solid #e2e2e2; }
.tree .doc, .tree .current { font-size:11px; }
.tree .current { height:27px; border-top:1px solid #222; }
.state { display:flex; align-items:center; gap:10px; width:130px; flex:none; padding-left:5px; background:#e4e4e4; border-bottom:1px solid #f0f0f0; }
.state b { width:26px; height:25px; margin-left:21px; background:#000; color:#fff; font:10px/10px "Noto Sans", sans-serif; text-align:center; padding-top:4px; }
.state b i { display:block; width:5px; height:5px; margin:3px auto 0; border-radius:50%; background:#fff; }
.node { display:flex; align-items:center; padding:2px 0 0 10px; white-space:nowrap; }
.node i { width:14px; padding-left:4px; font:9px "DejaVu Sans", sans-serif; }
.node .i { margin-right:2px; }
.node em { width:8px; height:8px; margin:0 4px; border-radius:50%; background:#333; }
.current .node { font-weight:bold; padding-top:0; }

/* drawing area */
.canvas { flex:1; display:flex; flex-direction:column; align-items:center; min-width:0; background:#fff; }
.quickbar { display:flex; align-self:flex-start; height:28px; width:680px; margin:0 0 8px 212px; background:#f0f0f0; border:1px solid #6a6a6a; border-top:0; color:#222; }
.quickbar button { display:flex; align-items:center; justify-content:center; width:28px; flex:none; }
.quickbar .handle { display:flex; flex-direction:column; align-items:center; gap:3px; width:16px; background:#e4e4e4; padding-top:3px; }
.handle i { width:12px; height:6px; background:radial-gradient(#444 35%, transparent 40%) 0 0/3px 3px; }
.handle .i { width:12px; height:12px; }
.quickbar .dark { background:#474747; width:26px; }
.dark .i { stroke:#fff; color:#fff; }
.dark .arrow { border-top-color:#fff; }
.quickbar .snap { width:46px; gap:9px; border-right:1px solid #f0f0f0; }
.quickbar .sep { border-right:1px solid #6a6a6a; }
.quickbar .fit { width:48px; gap:9px; }
.box { display:flex; align-items:center; gap:4px; padding-left:2px; background:#fff; border:1px solid #a9a9a9; }
.box select { flex:1; min-width:0; width:0; }
.cs { width:83px; }
.step { width:73px; }
.scale { width:73px; }
.box.cs { gap:1px; }
.coord { display:flex; align-items:center; width:59px; padding-left:3px; background:#e4e4e4; border:1px solid #c4c4c4; }
.coord input { width:44px; height:26px; padding:0 1px 0 5px; margin-left:auto; background:#fff; }

.sheet { width:386px; height:544px; flex:none; fill:none; overflow:visible; }
.thin { stroke:#000; }
.grey { stroke:#c8c8c8; }
.bold { stroke:#0080ff; stroke-width:2; }
.axis { stroke:#ff8000; stroke-dasharray:14 2 3 2; }
.sheet text { fill:#000; font-family:"Roboto", "Open Sans", sans-serif; font-style:italic; font-weight:300; }
.code { font-size:20px; }
.stamp { font-size:16px; }
.name { font-size:13px; }
.note { font-size:11px; }
.cell { font-size:7px; }
.sheet .origin text { font-family:"Noto Sans", sans-serif; font-style:normal; font-size:11px; stroke:none; }
.origin { stroke:#333; }

/* taskbar */
.taskbar { display:flex; align-items:center; height:40px; flex:none; background:#05080d; color:#fff; }
.taskbar button { display:flex; align-items:center; justify-content:center; width:48px; height:40px; margin-right:1px; }
.taskbar button:nth-child(-n+3) { margin-right:0; }
.taskbar svg { width:24px; height:24px; }
.taskbar .i { width:16px; height:16px; stroke:#fff; color:#fff; }
.taskbar .alice { margin:0 12px 0 8px; }
.bars { width:4px; height:16px; margin-right:13px; border:solid #444; border-width:0 1px; }
.run { border-bottom:2px solid #76b9ed; }
.cur { background:#3a3d41; }
.k { fill:none; stroke:#1a9be0; stroke-width:1.2; }
.tray { display:flex; align-items:center; margin:0 4px 0 auto; gap:8px; height:40px; padding-right:12px; border-right:1px solid #555; }
.tray .people { margin-right:12px; }
.lang { margin:0 1px 0 2px; }
.tray time { font-size:11px; text-align:center; line-height:18px; }
.notes { position:relative; width:24px; margin-left:10px; }
.notes b { position:absolute; left:8px; top:7px; width:16px; height:16px; border:1px solid #888; border-radius:8px; background:#333; font:11px/14px "Noto Sans", sans-serif; text-align:center; }
```
